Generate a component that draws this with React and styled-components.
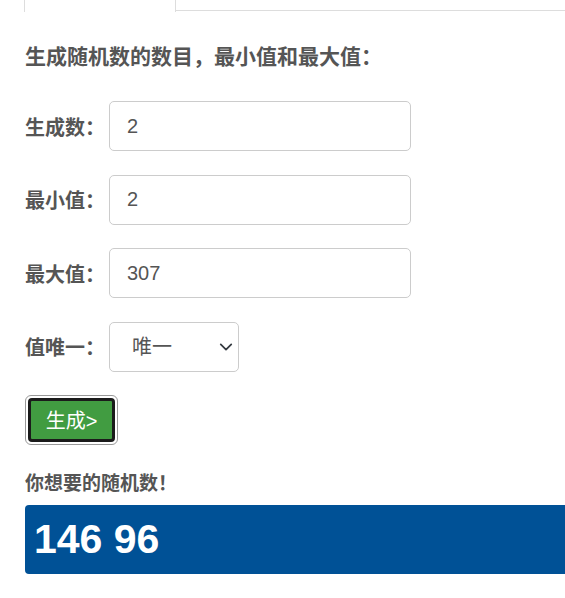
import styled, { createGlobalStyle } from 'styled-components';

const GlobalStyle = createGlobalStyle`
  html, body {
    margin: 0;
    padding: 0;
    background: #fff;
  }
  body {
    font-family: "Liberation Sans", "Noto Sans CJK SC", sans-serif;
    color: #555;
    overflow: hidden;
  }
`;

const Page = styled.div`
  width: 565px;
  height: 598px;
  overflow: hidden;
`;

const TabBar = styled.div`
  display: flex;
  height: 11px;
  padding-left: 24px;
`;

const Tab = styled.div`
  width: 150px;
  height: 12px;
  border-left: 1px solid #ddd;
  border-right: 1px solid #ddd;
  background: #fff;
`;

const TabRest = styled.div`
  flex: 1;
  border-bottom: 1px solid #ddd;
`;

const Body = styled.div`
  padding: 0 0 0 25px;
`;

const Heading = styled.h4`
  margin: 34px 0 33px;
  font-size: 21px;
  line-height: 23px;
  font-weight: 700;
  color: #555;
`;

const Form = styled.form`
  display: flex;
  flex-direction: column;
  gap: 23.5px;
`;

const Row = styled.div`
  display: flex;
  align-items: center;
  height: 50px;
`;

const Label = styled.label`
  width: 84px;
  font-size: 20px;
  font-weight: 700;
  color: #555;
`;

const Input = styled.input`
  box-sizing: border-box;
  width: 302px;
  height: 50px;
  padding: 0 17px;
  border: 1px solid #ccc;
  border-radius: 5px;
  font-family: "Liberation Sans", "Noto Sans CJK SC", sans-serif;
  font-size: 20px;
  color: #555;
  background: #fff;
  outline: none;
`;

const SelectBox = styled.div`
  position: relative;
  width: 130px;
  height: 50px;
`;

const Select = styled.select`
  box-sizing: border-box;
  width: 100%;
  height: 100%;
  padding: 0 0 0 22px;
  border: 1px solid #ccc;
  border-radius: 5px;
  font-family: "Liberation Sans", "Noto Sans CJK SC", sans-serif;
  font-size: 20px;
  color: #555;
  background: #fff;
  appearance: none;
  outline: none;
`;

const Chevron = styled.svg`
  position: absolute;
  right: 6px;
  top: 18px;
  pointer-events: none;
`;

const ButtonRing = styled.div`
  align-self: flex-start;
  padding: 2px;
  border: 1px solid #999;
  border-radius: 6px;
`;

const GoButton = styled.button`
  display: block;
  box-sizing: border-box;
  width: 87px;
  height: 44px;
  border: 3px solid #1b1b1b;
  border-radius: 4px;
  background: #419c41;
  color: #fff;
  font-family: "Liberation Sans", "Noto Sans CJK SC", sans-serif;
  font-size: 20px;
  padding: 0 0 2px;
`;

const ResultLabel = styled.h5`
  margin: 29px 0 11px;
  font-size: 19px;
  line-height: 20px;
  font-weight: 700;
  color: #555;
`;

const ResultBox = styled.div`
  display: flex;
  align-items: center;
  height: 69px;
  margin-right: -10px;
  padding-left: 9px;
  border-radius: 4px;
  background: #005196;
  color: #fff;
  font-family: "Liberation Sans", Arial, sans-serif;
  font-size: 41px;
  font-weight: 700;
`;

const fields = [
  { label: '生成数：', value: '2' },
  { label: '最小值：', value: '2' },
  { label: '最大值：', value: '307' },
];

export default function App() {
  return (
    <Page>
      <GlobalStyle />
      <TabBar>
        <Tab />
        <TabRest />
      </TabBar>
      <Body>
        <Heading>生成随机数的数目，最小值和最大值：</Heading>
        <Form onSubmit={(e) => e.preventDefault()}>
          {fields.map((f) => (
            <Row key={f.label}>
              <Label>{f.label}</Label>
              <Input type="text" defaultValue={f.value} />
            </Row>
          ))}
          <Row>
            <Label>值唯一：</Label>
            <SelectBox>
              <Select defaultValue="unique">
                <option value="unique">唯一</option>
                <option value="repeat">可重复</option>
              </Select>
              <Chevron width="14" height="14" viewBox="0 0 16 16">
                <path
                  d="M2 5l6 6 6-6"
                  fill="none"
                  stroke="#343a40"
                  strokeWidth="2"
                  strokeLinecap="round"
                  strokeLinejoin="round"
                />
              </Chevron>
            </SelectBox>
          </Row>
          <ButtonRing>
            <GoButton type="submit">生成&gt;</GoButton>
          </ButtonRing>
        </Form>
        <ResultLabel>你想要的随机数！</ResultLabel>
        <ResultBox>146 96</ResultBox>
      </Body>
    </Page>
  );
}
